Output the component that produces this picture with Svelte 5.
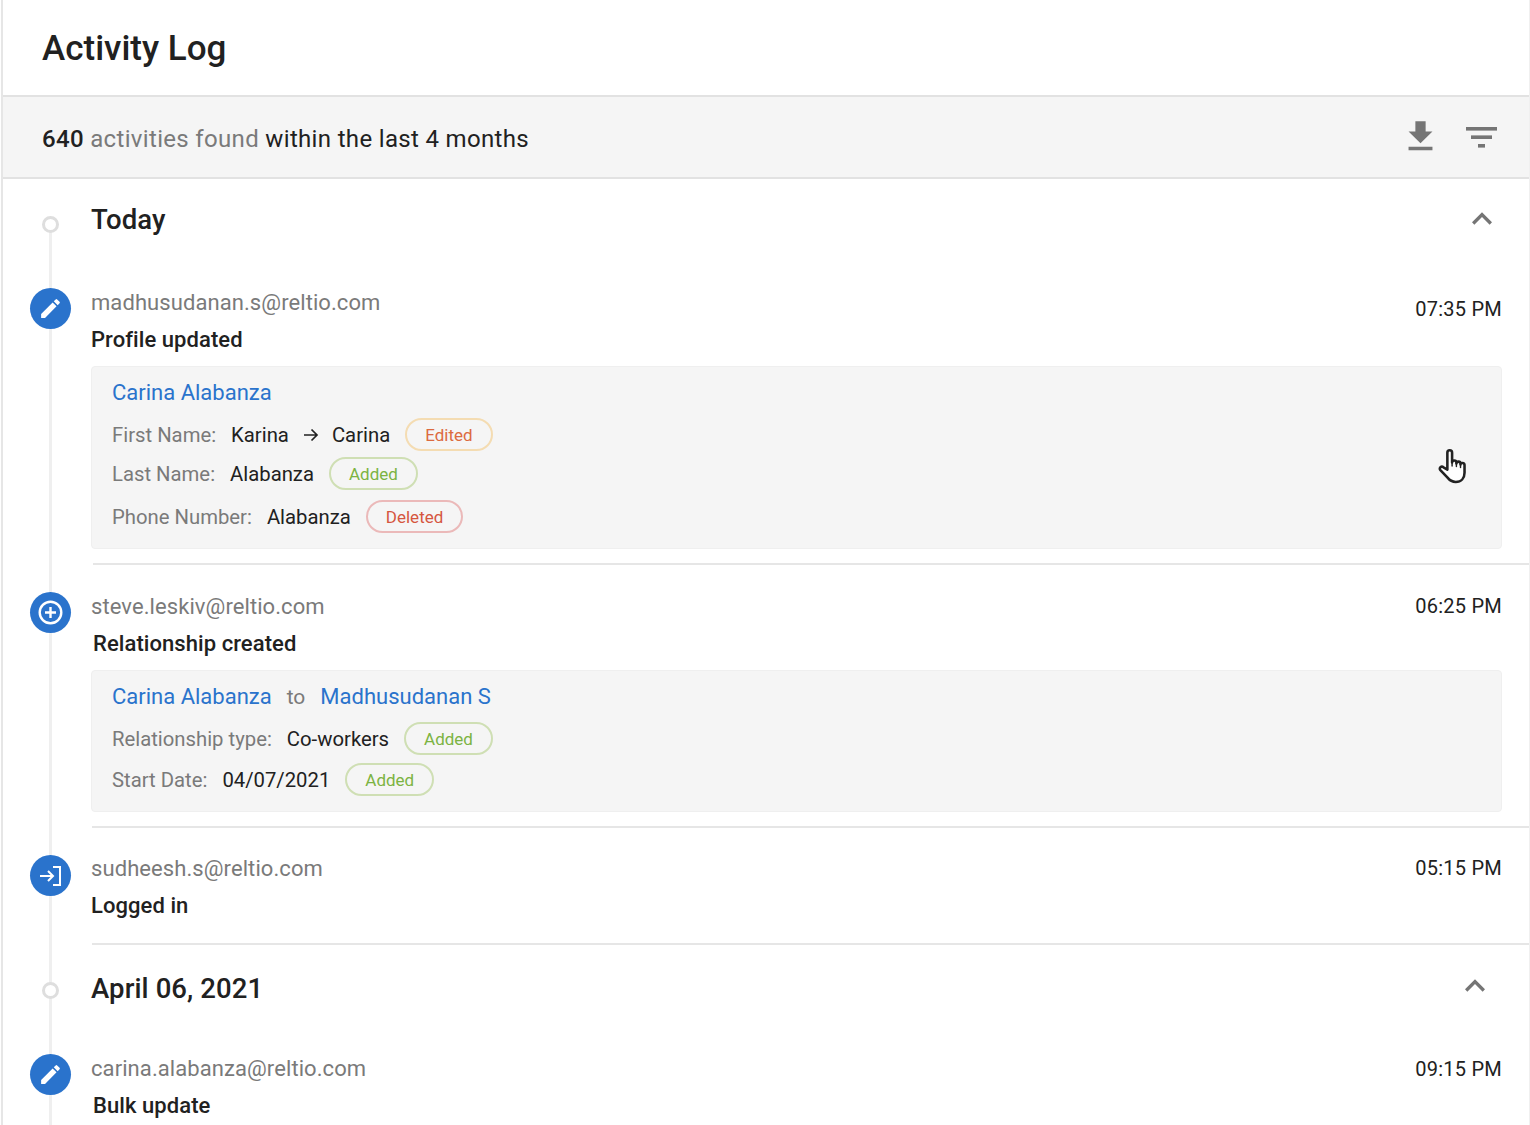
<script>
  const pen = 'M3 17.25V21h3.75L17.81 9.94l-3.75-3.75L3 17.25zM20.71 7.04a1 1 0 0 0 0-1.41l-2.34-2.34a1 1 0 0 0-1.41 0l-1.83 1.83 3.75 3.75 1.83-1.83z';
  const chevron = 'M12 8l-6 6 1.41 1.41L12 10.83l4.59 4.58L18 14z';
</script>

{#snippet pill(kind, label)}
  <span class="pill {kind}">{label}</span>
{/snippet}

{#snippet node(kind)}
  <div class="node">
    {#if kind === 'edit'}
      <svg viewBox="0 0 24 24" width="25" height="25"><path d={pen} fill="#fff" /></svg>
    {:else if kind === 'add'}
      <svg viewBox="0 0 27 27" width="27" height="27" fill="none" stroke="#fff" stroke-width="2.4">
        <circle cx="13.5" cy="13.5" r="10.8" />
        <path d="M13.5 8v11M8 13.5h11" />
      </svg>
    {:else}
      <svg viewBox="0 0 21 20" width="21" height="20" fill="none" stroke="#fff" stroke-width="2">
        <path d="M0 10h12.500M8 5l5 5-5 5" />
        <path d="M13 1h7v18h-7" />
      </svg>
    {/if}
  </div>
{/snippet}

<div class="page">
  <header class="top"><h1>Activity Log</h1></header>

  <div class="toolbar">
    <p class="summary"><span class="strong">640</span> <span class="muted">activities found</span> within the last 4 months</p>
    <div class="tools">
      <svg class="dl" viewBox="0 0 24 24" width="41" height="41"><path d="M19 9h-4V3H9v6H5l7 7 7-7zM5 18v2h14v-2H5z" fill="#757575" /></svg>
      <svg class="filter" viewBox="0 0 31 21" width="31" height="21" fill="#757575">
        <rect x="0" y="0" width="31" height="3.6" />
        <rect x="5" y="8.4" width="21" height="3.6" />
        <rect x="12" y="17" width="7" height="3.6" />
      </svg>
    </div>
  </div>

  <main class="timeline">
    <div class="rail"></div>

    <section class="day">
      <div class="dot"></div>
      <h2>Today</h2>
      <svg class="chev" viewBox="0 0 24 24" width="40" height="40"><path d={chevron} fill="#757575" /></svg>
    </section>

    <article class="entry">
      {@render node('edit')}
      <div class="body">
        <div class="line">
          <span class="email">madhusudanan.s@reltio.com</span>
          <span class="time low">07:35 PM</span>
        </div>
        <div class="title">Profile updated</div>
        <div class="card first">
          <a class="link" href="#a">Carina Alabanza</a>
          <div class="row">
            <span class="label">First Name:</span>
            <span class="val">Karina</span>
            <svg class="arrow" viewBox="0 0 16 14" width="16" height="14" fill="none" stroke="#212121" stroke-width="1.7"><path d="M1 7h13M8.5 1.5 14 7l-5.500 5.500" /></svg>
            <span class="val">Carina</span>
            {@render pill('edited', 'Edited')}
          </div>
          <div class="row tight">
            <span class="label">Last Name:</span>
            <span class="val">Alabanza</span>
            {@render pill('added', 'Added')}
          </div>
          <div class="row late">
            <span class="label">Phone Number:</span>
            <span class="val">Alabanza</span>
            {@render pill('deleted', 'Deleted')}
          </div>
          <svg class="hand" viewBox="0 0 30 36" width="31" height="37" fill="#fff" stroke="#222" stroke-width="2.5" stroke-linejoin="round" stroke-linecap="round">
            <path d="M10 21V4.500a2.300 2.300 0 0 1 4.600 0V14c0-2.400 4.200-2.400 4.200 0v1c0-2.300 4-2.300 4 0v1c0-2 3.900-2 3.900 .5v7.500c0 5.500-3.300 9-8.500 9-4 0-6-1.600-8-4.200l-7-7.300c-1.800-2 1-4.300 3-2.700z" />
            <path d="M14.600 14v3.500M18.800 15v3M22.800 16v3" stroke-width="1.400" />
          </svg>
        </div>
      </div>
    </article>

    <hr class="rule r1" />

    <article class="entry">
      {@render node('add')}
      <div class="body">
        <div class="line">
          <span class="email">steve.leskiv@reltio.com</span>
          <span class="time">06:25 PM</span>
        </div>
        <div class="title nudge">Relationship created</div>
        <div class="card">
          <div class="names">
            <a class="link" href="#b">Carina Alabanza</a>
            <span class="label">to</span>
            <a class="link" href="#c">Madhusudanan S</a>
          </div>
          <div class="row">
            <span class="label">Relationship type:</span>
            <span class="val">Co-workers</span>
            {@render pill('added', 'Added')}
          </div>
          <div class="row even">
            <span class="label">Start Date:</span>
            <span class="val">04/07/2021</span>
            {@render pill('added', 'Added')}
          </div>
        </div>
      </div>
    </article>

    <hr class="rule r2" />

    <article class="entry third">
      {@render node('login')}
      <div class="body">
        <div class="line">
          <span class="email">sudheesh.s@reltio.com</span>
          <span class="time">05:15 PM</span>
        </div>
        <div class="title">Logged in</div>
      </div>
    </article>

    <hr class="rule r3" />

    <section class="day second">
      <div class="dot"></div>
      <h2>April 06, 2021</h2>
      <svg class="chev" viewBox="0 0 24 24" width="40" height="40"><path d={chevron} fill="#757575" /></svg>
    </section>

    <article class="entry last">
      {@render node('edit')}
      <div class="body">
        <div class="line">
          <span class="email">carina.alabanza@reltio.com</span>
          <span class="time">09:15 PM</span>
        </div>
        <div class="title nudge">Bulk update</div>
      </div>
    </article>
  </main>
</div>

<style>
  :global(body) {
    margin: 0;
    background: #fff;
  }
  .page {
    height: 1125px;
    overflow: hidden;
    box-sizing: border-box;
    border-left: 2px solid #e6e6e6;
    border-right: 1px solid #f0f0f0;
    margin-left: 1px;
    display: flex;
    flex-direction: column;
    font-family: Roboto, "Liberation Sans", sans-serif;
    color: #212121;
  }
  .top {
    height: 97px;
    flex: none;
    box-sizing: border-box;
    border-bottom: 2px solid #e2e2e2;
    padding: 28px 0 0 39px;
  }
  h1 {
    margin: 0;
    font-size: 35px;
    line-height: 42px;
    font-weight: 500;
  }
  .toolbar {
    height: 82px;
    flex: none;
    box-sizing: border-box;
    background: #f5f5f5;
    border-bottom: 2px solid #e2e2e2;
    padding: 0 32px 0 39px;
    display: flex;
    align-items: center;
    justify-content: space-between;
  }
  .summary {
    margin: 0;
    font-size: 24px;
    line-height: 30px;
    letter-spacing: 0.33px;
    position: relative;
    top: 2px;
  }
  .strong {
    font-weight: 500;
  }
  .muted {
    color: #7a7a7a;
  }
  .tools {
    display: flex;
    align-items: flex-start;
    gap: 25px;
    height: 41px;
    margin-top: -3px;
  }
  .dl {
    margin-top: 1px;
  }
  .filter {
    margin-top: 12px;
  }
  .timeline {
    position: relative;
    flex: 1;
    min-height: 0;
  }
  .rail {
    position: absolute;
    left: 46px;
    top: 50px;
    bottom: 0;
    width: 3px;
    background: #efefef;
  }
  .day {
    height: 109px;
    box-sizing: border-box;
    position: relative;
    display: flex;
    justify-content: space-between;
    align-items: flex-start;
    padding: 21px 27px 0 88px;
  }
  .day .chev {
    margin-top: -1px;
  }
  .day.second {
    padding-top: 24px;
    padding-right: 34px;
  }
  .dot {
    position: absolute;
    left: 39px;
    top: 37px;
    width: 17px;
    height: 17px;
    box-sizing: border-box;
    border: 3.500px solid #dedede;
    border-radius: 50%;
    background: #fff;
  }
  h2 {
    margin: 0;
    font-size: 27.500px;
    line-height: 40px;
    font-weight: 500;
    letter-spacing: 0.1px;
  }
  .day.second .chev {
    margin-top: -3px;
  }
  .entry {
    position: relative;
    display: grid;
    grid-template-columns: 88px 1fr;
    padding-right: 27px;
  }
  .node {
    width: 41px;
    height: 41px;
    margin: 0 0 0 27px;
    border-radius: 50%;
    background: #2a73cc;
    display: flex;
    align-items: center;
    justify-content: center;
    position: relative;
  }
  .third .node {
    margin-top: 1px;
  }
  .line {
    display: flex;
    justify-content: space-between;
    height: 28px;
    padding-top: 1px;
    line-height: 28px;
  }
  .email {
    font-size: 22px;
    letter-spacing: 0.08px;
    color: #7a7a7a;
  }
  .time {
    font-size: 20px;
    letter-spacing: 0.25px;
    margin-top: -1px;
  }
  .last .time {
    margin-top: 0;
  }
  .time.low {
    position: relative;
    top: 7px;
  }
  .title {
    margin-top: 9px;
    font-size: 22px;
    letter-spacing: 0.07px;
    line-height: 28px;
    font-weight: 500;
  }
  .title.nudge {
    margin-left: 2px;
  }
  .card {
    position: relative;
    margin-top: 12px;
    box-sizing: border-box;
    background: #f5f5f5;
    border: 1px solid #efefef;
    border-radius: 4px;
    padding: 12px 20px 15px;
  }
  .link {
    color: #2a73cc;
    text-decoration: none;
    font-size: 22px;
    line-height: 28px;
  }
  .card > .link {
    display: block;
    height: 28px;
  }
  .names {
    display: flex;
    height: 28px;
    gap: 15px;
    align-items: center;
  }
  .names .label {
    font-size: 21px;
  }
  .row {
    display: flex;
    align-items: center;
    gap: 15px;
    height: 33px;
    margin-top: 9px;
  }
  .names + .row,
  .link + .row {
    margin-top: 11px;
  }
  .row.tight {
    margin-top: 6px;
  }
  .row.even {
    margin-top: 8px;
  }
  .row.late {
    margin-top: 10px;
  }
  .label {
    font-size: 20.300px;
    color: #7a7a7a;
  }
  .val {
    font-size: 20.300px;
    color: #212121;
  }
  .arrow {
    flex: none;
    margin-right: -2px;
    margin-left: -1px;
  }
  .pill {
    box-sizing: border-box;
    height: 33px;
    border: 2px solid;
    border-radius: 17px;
    padding: 0 18px;
    display: inline-flex;
    align-items: center;
    justify-content: center;
    font-size: 17px;
    background: transparent;
  }
  .edited {
    color: #dc6a40;
    border-color: #f4dcb2;
  }
  .added {
    color: #7cb342;
    border-color: #cfdfb4;
  }
  .deleted {
    color: #d5563f;
    border-color: #ebb9b9;
  }
  .hand {
    position: absolute;
    right: 33px;
    top: 81px;
  }
  .rule {
    border: 0;
    height: 2px;
    background: #e6e6e6;
    margin: 14px 0 0 90px;
  }
  .r1 + .entry {
    margin-top: 27px;
  }
  .r2 {
    margin-left: 89px;
  }
  .r2 + .entry {
    margin-top: 26px;
  }
  .r3 {
    margin: 23px 0 0 89px;
  }
</style>
